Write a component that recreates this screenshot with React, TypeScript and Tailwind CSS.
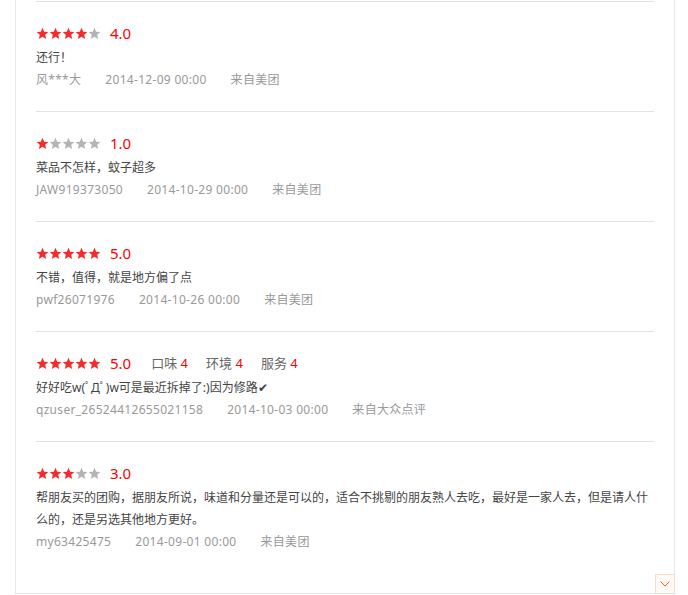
import React from 'react';

type Review = {
  rating: number;
  text: string;
  user: string;
  date: string;
  source: string;
  scores?: { label: string; value: number }[];
};

const REVIEWS: Review[] = [
  { rating: 4, text: '还行！', user: '风***大', date: '2014-12-09 00:00', source: '来自美团' },
  { rating: 1, text: '菜品不怎样，蚊子超多', user: 'JAW919373050', date: '2014-10-29 00:00', source: '来自美团' },
  { rating: 5, text: '不错，值得，就是地方偏了点', user: 'pwf26071976', date: '2014-10-26 00:00', source: '来自美团' },
  {
    rating: 5,
    text: '好好吃w(ﾟДﾟ)w可是最近拆掉了:)因为修路✔',
    user: 'qzuser_26524412655021158',
    date: '2014-10-03 00:00',
    source: '来自大众点评',
    scores: [
      { label: '口味', value: 4 },
      { label: '环境', value: 4 },
      { label: '服务', value: 4 },
    ],
  },
  {
    rating: 3,
    text: '帮朋友买的团购，据朋友所说，味道和分量还是可以的，适合不挑剔的朋友熟人去吃，最好是一家人去，但是请人什么的，还是另选其他地方更好。',
    user: 'my63425475',
    date: '2014-09-01 00:00',
    source: '来自美团',
  },
];

function Star({ on }: { on: boolean }) {
  return (
    <svg width="13" height="13" viewBox="0 0 24 24" className="shrink-0">
      <path
        d="M12 1.5l3.1 7.1 7.7.7-5.8 5.1 1.7 7.6L12 18l-6.7 4 1.7-7.6L1.2 9.3l7.7-.7z"
        fill={on ? '#f52b2b' : '#b4b4b4'}
      />
    </svg>
  );
}

export default function App() {
  return (
    <div
      className="w-[688px] h-[595px] bg-white overflow-hidden"
      style={{ fontFamily: '"Noto Sans", "Noto Sans CJK SC", sans-serif' }}
    >
      <div className="relative ml-[15px] w-[660px] border-x border-b border-[#e6e6e6] px-5 pt-px pb-5">
        {REVIEWS.map((r, idx) => (
          <div key={idx} className="border-t border-[#e3e3e3] pt-[22px] pb-[20px]">
            {/* rating row */}
            <div className="flex items-center h-[18px]">
              <div className="flex">
                {[0, 1, 2, 3, 4].map((i) => (
                  <Star key={i} on={i < r.rating} />
                ))}
              </div>
              <span className="ml-[9px] text-[15px] leading-none text-[#f00]">{r.rating.toFixed(1)}</span>
              {r.scores && (
                <div className="flex ml-[20px] gap-[18px] text-[13px] leading-none text-[#666]">
                  {r.scores.map((s) => (
                    <span key={s.label}>
                      {s.label} <span className="text-[#f00]">{s.value}</span>
                    </span>
                  ))}
                </div>
              )}
            </div>

            <p className="mt-[5px] text-[12px] leading-[22px] text-[#444]">{r.text}</p>

            <div className="flex gap-6 text-[12px] leading-[22px] tracking-[0.3px] text-[#999]">
              <span>{r.user}</span>
              <span>{r.date}</span>
              <span>{r.source}</span>
            </div>
          </div>
        ))}

        {/* scroll-down button */}
        <div className="absolute -right-px -bottom-px w-5 h-5 border border-[#fbdcc4] bg-[#fffaf6] flex items-center justify-center">
          <svg width="10" height="6" viewBox="0 0 10 6">
            <path d="M0.5 0.5L5 5L9.5 0.5" fill="none" stroke="#ff6a00" strokeWidth="1" />
          </svg>
        </div>
      </div>
    </div>
  );
}
